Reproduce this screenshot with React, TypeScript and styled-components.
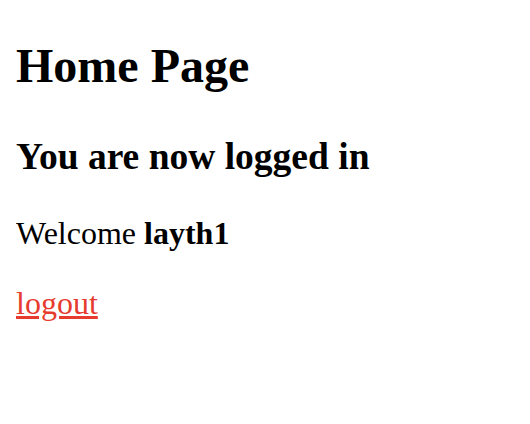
import { createGlobalStyle } from 'styled-components'
import styled from 'styled-components'

const GlobalStyle = createGlobalStyle`
  body {
    margin: 16px;
    background: #fff;
    color: #000;
    font-family: 'Liberation Serif', 'Times New Roman', serif;
  }
`

const Page = styled.div`
  display: flex;
  flex-direction: column;
`

const Title = styled.h1`
  font-size: 48px;
  font-weight: bold;
  margin: 22px 0 42px;
`

const Subtitle = styled.h2`
  font-size: 37.5px;
  font-weight: bold;
  margin: 0 0 37px;
`

const Text = styled.p`
  font-size: 32px;
  margin: 0 0 33px;
`

const LogoutLink = styled.a`
  font-size: 32px;
  color: #e63b2e;
  text-decoration: underline;
`

export default function App() {
  return (
    <>
      <GlobalStyle />
      <Page>
        <Title>Home Page</Title>
        <Subtitle>You are now logged in</Subtitle>
        <Text>
          Welcome <b>layth1</b>
        </Text>
        <div>
          <LogoutLink href="#">logout</LogoutLink>
        </div>
      </Page>
    </>
  )
}
